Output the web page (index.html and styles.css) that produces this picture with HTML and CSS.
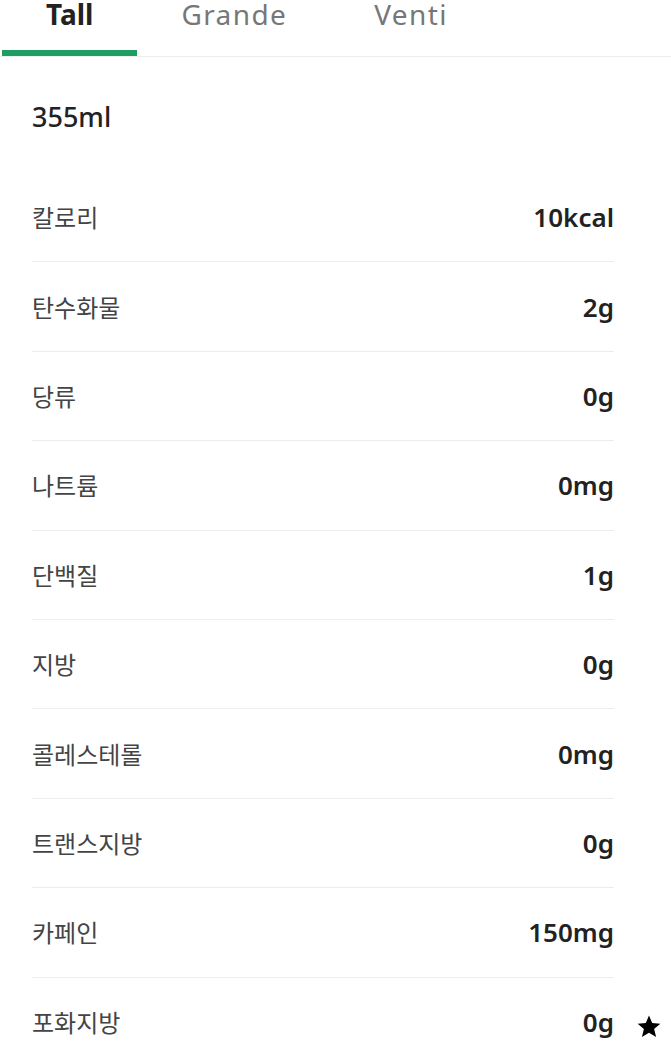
FILE: index.html
```html
<!DOCTYPE html>
<html lang="ko">
<head>
<meta charset="utf-8">
<title>영양 정보</title>
<link rel="stylesheet" href="styles.css">
</head>
<body>
<nav class="tabs">
  <div class="tab active">Tall</div>
  <div class="tab">Grande</div>
  <div class="tab">Venti</div>
</nav>
<div class="volume">355ml</div>
<ul class="nutri">
  <li class="row"><span class="label">칼로리</span><span class="value">10kcal</span></li>
  <li class="row"><span class="label">탄수화물</span><span class="value">2g</span></li>
  <li class="row"><span class="label">당류</span><span class="value">0g</span></li>
  <li class="row"><span class="label">나트륨</span><span class="value">0mg</span></li>
  <li class="row"><span class="label">단백질</span><span class="value">1g</span></li>
  <li class="row"><span class="label">지방</span><span class="value">0g</span></li>
  <li class="row"><span class="label">콜레스테롤</span><span class="value">0mg</span></li>
  <li class="row"><span class="label">트랜스지방</span><span class="value">0g</span></li>
  <li class="row"><span class="label">카페인</span><span class="value">150mg</span></li>
  <li class="row last"><span class="label">포화지방</span><span class="value">0g</span>
    <svg class="star" viewBox="0 0 24 24" width="24" height="25" aria-hidden="true"><path d="M12 1l3.2 7.6 8.1.6-6.2 5.3 2 8L12 18.2l-7.1 4.3 2-8L.7 9.2l8.1-.6z" fill="#000"/></svg>
  </li>
</ul>
</body>
</html>
```
FILE: styles.css
```css
* { box-sizing: border-box; }
html, body { margin: 0; padding: 0; background: #fff; }
body { width: 671px; font-family: "Noto Sans", "Noto Sans CJK KR", sans-serif; }

.tabs {
  display: flex;
  padding-left: 2px;
  border-bottom: 1px solid #ececec;
}
.tab {
  padding: 0 43px 22px 44px;
  font-size: 28px;
  line-height: 28px;
  color: #777;
  border-bottom: 6px solid transparent;
  letter-spacing: 1.4px;
}
.tab.active {
  padding-right: 44px;
  color: #222;
  font-weight: 700;
  letter-spacing: 0;
  border-bottom-color: #1e9e64;
}

.volume {
  margin: 42px 0 0 32px;
  font-size: 27px;
  line-height: 36px;
  font-weight: 500;
  color: #222;
}

.nutri {
  list-style: none;
  margin: 38px 0 0 32px;
  padding: 0;
  width: 582px;
}
.row {
  position: relative;
  display: flex;
  justify-content: space-between;
  align-items: center;
  height: 89.4px;
  border-bottom: 1px solid #ededed;
}
.row.last { border-bottom: none; height: 88.4px; }
.label {
  font-family: "Noto Sans CJK KR", sans-serif;
  font-size: 24px;
  line-height: 30px;
  color: #444;
}
.value {
  font-size: 26px;
  line-height: 30px;
  font-weight: 600;
  color: #222;
}
.star {
  position: absolute;
  right: -47px;
  top: 36px;
}
```
